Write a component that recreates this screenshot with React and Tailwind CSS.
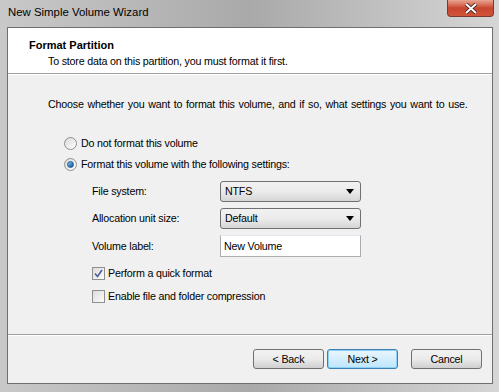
function Radio({ checked, label }) {
  return (
    <div className="flex items-center gap-[4px] h-[15px]">
      <span className="w-[13px] h-[13px] rounded-full border border-[#8e8f8f] bg-gradient-to-br from-[#d9d9d9] to-[#ffffff] flex items-center justify-center">
        {checked && <span className="w-[7px] h-[7px] rounded-full bg-gradient-to-br from-[#7fd2f6] to-[#0e4b8e] border border-[#1e5894]" />}
      </span>
      <span>{label}</span>
    </div>
  )
}

function Check({ checked, label }) {
  return (
    <div className="flex items-center gap-[3px] h-[15px]">
      <span className="w-[13px] h-[13px] border border-[#8e8f8f] bg-gradient-to-br from-[#dcdcdc] to-[#fbfbfb] flex items-center justify-center">
        {checked && (
          <svg width="9" height="9" viewBox="0 0 9 9">
            <path d="M1 4.5 L3.5 7.5 L8 1" fill="none" stroke="#4a5f97" strokeWidth="1.6" />
          </svg>
        )}
      </span>
      <span>{label}</span>
    </div>
  )
}

function Select({ value }) {
  return (
    <div className="w-[141px] h-[21px] rounded-[3px] border border-[#707070] bg-gradient-to-b from-[#f2f2f2] via-[#ebebeb] to-[#d6d6d6] flex items-center justify-between pl-[4px] pr-[6px]">
      <span>{value}</span>
      <svg width="8" height="5" viewBox="0 0 8 5"><path d="M0 0 H8 L4 5 Z" fill="#000" /></svg>
    </div>
  )
}

function Btn({ children, active }) {
  return (
    <button className={`w-[71px] h-[20px] rounded-[3px] border flex items-center justify-center ${active ? 'border-[#3c7fb1] bg-gradient-to-b from-[#eaf6fd] to-[#bee6fd] shadow-[inset_0_0_0_1px_#8ed1f5]' : 'border-[#707070] bg-gradient-to-b from-[#f2f2f2] via-[#ebebeb] to-[#cfcfcf]'}`}>
      {children}
    </button>
  )
}

export default function App() {
  return (
    <div className="w-[499px] h-[392px] bg-gradient-to-r from-[#c9c9c9] via-[#a9a9a9] to-[#d6d6d6] text-[10.7px] tracking-[-0.2px] leading-[15px] text-black font-['Liberation_Sans',Arial,sans-serif] flex flex-col overflow-hidden">
      <div className="h-[27px] flex items-start justify-between pl-[8px] pr-[5px]">
        <span className="mt-[5px] text-[11.4px] tracking-normal">New Simple Volume Wizard</span>
        <div className="w-[47px] h-[17px] rounded-b-[4px] border border-[#7a3a30] border-t-0 bg-gradient-to-b from-[#e8a493] via-[#c9452e] to-[#d1543b] flex items-center justify-center">
          <svg width="14" height="11" viewBox="0 0 14 11">
            <path d="M2 1 L12 10 M12 1 L2 10" stroke="#3a1a14" strokeWidth="3.6" />
            <path d="M2 1 L12 10 M12 1 L2 10" stroke="#fff" strokeWidth="2" />
          </svg>
        </div>
      </div>
      <div className="mx-[7px] mr-[6px] h-[357px] border border-[#6f6f6f] bg-[#f0f0f0] flex flex-col">
        <div className="h-[46px] bg-white border-b border-[#a0a0a0] pl-[21px] pt-[9px] leading-[16px]">
          <div className="font-bold text-[11px] tracking-normal">Format Partition</div>
          <div className="pl-[19px]">To store data on this partition, you must format it first.</div>
        </div>
        <div className="h-px bg-white" />
        <div className="pl-[40px] pt-[22px] [word-spacing:1px]">Choose whether you want to format this volume, and if so, what settings you want to use.</div>
        <div className="pl-[56px] pt-[24px] flex flex-col gap-[6px]">
          <Radio label="Do not format this volume" />
          <Radio checked label="Format this volume with the following settings:" />
        </div>
        <div className="pl-[84px] pt-[9px] flex flex-col gap-[6px]">
          <div className="flex items-center">
            <span className="w-[128px]">File system:</span>
            <Select value="NTFS" />
          </div>
          <div className="flex items-center">
            <span className="w-[128px]">Allocation unit size:</span>
            <Select value="Default" />
          </div>
          <div className="flex items-center">
            <span className="w-[128px]">Volume label:</span>
            <div className="w-[141px] h-[22px] border border-[#abadb3] border-t-[#e3e9ef] bg-white flex items-center pl-[3px]">New Volume</div>
          </div>
        </div>
        <div className="pl-[84px] pt-[9px] flex flex-col gap-[8px]">
          <Check checked label="Perform a quick format" />
          <Check label="Enable file and folder compression" />
        </div>
        <div className="flex-1" />
        <div className="h-px bg-[#a0a0a0]" />
        <div className="h-px bg-white" />
        <div className="h-[47px] flex items-start justify-end pr-[10px] pt-[13px]">
          <Btn>&lt; Back</Btn>
          <div className="w-[3px]" />
          <Btn active>Next &gt;</Btn>
          <div className="w-[13px]" />
          <Btn>Cancel</Btn>
        </div>
      </div>
    </div>
  )
}
